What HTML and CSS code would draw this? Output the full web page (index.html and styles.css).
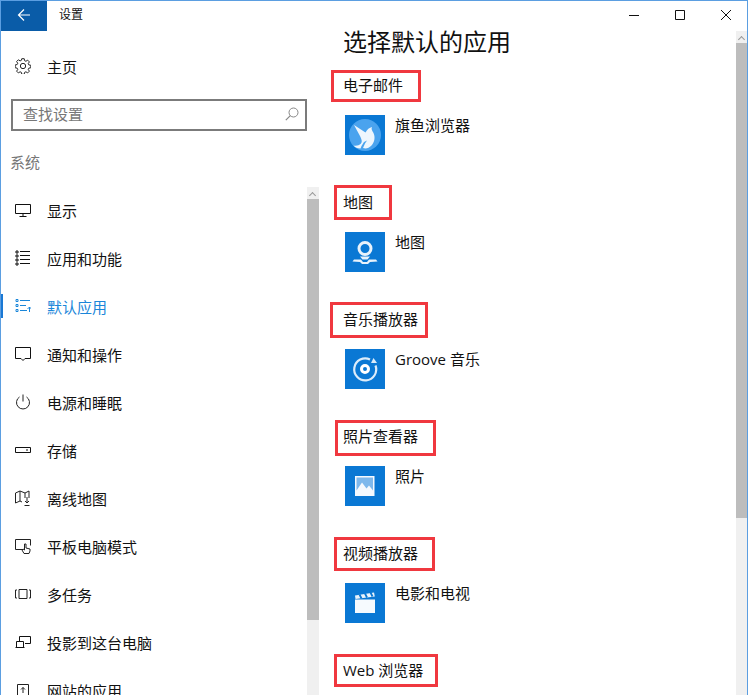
FILE: index.html
```html
<!DOCTYPE html>
<html lang="zh-CN">
<head>
<meta charset="utf-8">
<title>设置</title>
<link rel="stylesheet" href="styles.css">
</head>
<body>
<div class="window">
  <aside class="sidebar">
    <div class="titlebar">
      <div class="back"><svg width="16" height="16" viewBox="0 0 16 16"><path d="M14 8H2.500M8 2.500 2.500 8 8 13.500" fill="none" stroke="#fff" stroke-width="1.200"/></svg></div>
      <span class="apptitle">设置</span>
    </div>
    <div class="home">
      <svg class="icon" width="16" height="16" viewBox="0 0 18 18"><g fill="none" stroke="#222" stroke-width="1.100"><circle cx="9" cy="9" r="3"/><path d="M7.600.8h2.800l.4 2.200 1.500.7 1.900-1.300 2 2-1.300 1.900.7 1.500 2.200.4v2.800l-2.200.4-.7 1.500 1.300 1.900-2 2-1.900-1.300-1.500.7-.4 2.200H7.600l-.4-2.200-1.500-.7-1.900 1.300-2-2 1.300-1.900-.7-1.500-2.200-.4V7.800l2.200-.4.7-1.500-1.300-1.900 2-2 1.900 1.300 1.500-.7z"/></g></svg>
      <span>主页</span>
    </div>
    <div class="search">
      <span>查找设置</span>
      <svg width="14" height="14" viewBox="0 0 14 14"><circle cx="8.500" cy="5.500" r="4.500" fill="none" stroke="#888"/><path d="M5.300 8.700.8 13.200" stroke="#888" stroke-width="1.200"/></svg>
    </div>
    <div class="group">系统</div>
    <nav class="nav">
      <div class="navitem"><svg class="icon" width="16" height="16" viewBox="0 0 16 16"><path d="M.5 2.500h15v9H.5zM8 11.500v2.500M4.500 14.500h7" fill="none" stroke="#111"/></svg><span>显示</span></div>
      <div class="navitem"><svg class="icon" width="16" height="16" viewBox="0 0 16 16"><path d="M5 1.500h10M5 5.500h10M5 9.500h10M5 13.500h10M1 1h2v2H1zM1 5h2v2H1zM1 9h2v2H1zM1 13h2v2H1z" fill="none" stroke="#111"/></svg><span>应用和功能</span></div>
      <div class="navitem active"><svg class="icon" width="16" height="16" viewBox="0 0 16 16"><path d="M5 2.500h10M5 7.500h6M5 12.500h7M1 1.500h2v2H1zM1 6.500h2v2H1zM1 11.500h2v2H1zM14.500 14v-5M12.500 11l2-2 2 2" fill="none" stroke="#1a86d9"/></svg><span>默认应用</span></div>
      <div class="navitem"><svg class="icon" width="16" height="16" viewBox="0 0 16 16"><path d="M.5 1.500h15v11H10l-2 2-2-2H.5z" fill="none" stroke="#111"/></svg><span>通知和操作</span></div>
      <div class="navitem"><svg class="icon" width="16" height="16" viewBox="0 0 16 16"><path d="M4.500 3a6.500 6.500 0 1 0 7 0M8 .5v7" fill="none" stroke="#222"/></svg><span>电源和睡眠</span></div>
      <div class="navitem"><svg class="icon" width="16" height="16" viewBox="0 0 16 16"><path d="M.5 5.500h15v5H.5zM11 8h2" fill="none" stroke="#111"/></svg><span>存储</span></div>
      <div class="navitem"><svg class="icon" width="16" height="16" viewBox="0 0 16 16"><path d="M.5 13V3L5 1l5 2 4-2v7M.5 13 5 11l2 1M5 1v10M10 3v5M12 7v6M10 11l2 2 2-2M9.500 15.500h5" fill="none" stroke="#222"/></svg><span>离线地图</span></div>
      <div class="navitem"><svg class="icon" width="16" height="16" viewBox="0 0 16 16"><path d="M7 11.500H.5v-10h15v6M9 15.500 7 12l1-1 1.500 1V6h1.500v4l4 1v2l-1 2.500z" fill="#fff" stroke="#222"/></svg><span>平板电脑模式</span></div>
      <div class="navitem"><svg class="icon" width="16" height="16" viewBox="0 0 16 16"><path d="M4 3.500h8v9H4zM2 4H.5v8H2M14 4h1.500v8H14" fill="none" stroke="#222"/></svg><span>多任务</span></div>
      <div class="navitem"><svg class="icon" width="16" height="16" viewBox="0 0 16 16"><path d="M4.500 7V2.500h11v7H10M.5 13.500h9M1.500 13V7.500h7V13" fill="none" stroke="#111"/></svg><span>投影到这台电脑</span></div>
      <div class="navitem"><svg class="icon" width="16" height="16" viewBox="0 0 16 16"><path d="M2.500 2.500h11v11h-11zM8 11V5.500M6 7.500l2-2 2 2" fill="none" stroke="#222"/></svg><span>网站的应用</span></div>
    </nav>
    <div class="vscroll leftscroll"><i class="arrow"></i><b class="thumb leftthumb"></b></div>
  </aside>
  <main class="content">
    <div class="controls">
      <svg width="12" height="12" viewBox="0 0 12 12"><path d="M1 6.500h10" stroke="#111"/></svg>
      <svg width="12" height="12" viewBox="0 0 12 12"><path d="M1.500 1.500h9v9h-9z" fill="none" stroke="#111"/></svg>
      <svg width="12" height="12" viewBox="0 0 12 12"><path d="M1 1l10 10M11 1 1 11" stroke="#111"/></svg>
    </div>
    <h1>选择默认的应用</h1>
    <section class="app">
      <h2>电子邮件</h2><div class="mark m1"></div>
      <div class="row"><div class="tile"><svg width="40" height="40" viewBox="0 0 40 40"><circle cx="20" cy="20" r="16" fill="#4aa3ee"/><path d="M9 10l11.500 7.500c1.500-3 4-5 6.500-5.500-1 2 0 3.500 1.500 6 2 4.500 1 9-2 12.500-2 2-4 3-6 3l-2.500-.5 2-4.500 2-3-3 1.500-2.500 4-1 2.500c-3 0-5.500-1-7-3 3 .5 5.500 0 7.500-2 1.500-2 .5-4.500-1-7.500z" fill="#eef6fd"/></svg></div><span>旗鱼浏览器</span></div>
    </section>
    <section class="app">
      <h2>地图</h2><div class="mark m2"></div>
      <div class="row"><div class="tile"><svg width="40" height="40" viewBox="0 0 40 40"><circle cx="20" cy="16.500" r="6" fill="none" stroke="#e8f2fb" stroke-width="3"/><path d="M15 24.500h10l-2.500 3h-5zM9 27.500h7l2 2.500h4l2-2.500h7l1.500 2-7.500.5-2 2h-6l-2-2-7.500-.5z" fill="#e8f2fb"/></svg></div><span>地图</span></div>
    </section>
    <section class="app">
      <h2>音乐播放器</h2><div class="mark m3"></div>
      <div class="row"><div class="tile"><svg width="40" height="40" viewBox="0 0 40 40"><path d="M25 10.500a11 11 0 1 0 5.500 6" fill="none" stroke="#dcecfa" stroke-width="2.200"/><path d="M26 14l2.500-5 3.500 5z" fill="#dcecfa"/><circle cx="20" cy="20" r="3.500" fill="none" stroke="#fff" stroke-width="3"/></svg></div><span>Groove 音乐</span></div>
    </section>
    <section class="app">
      <h2>照片查看器</h2><div class="mark m4"></div>
      <div class="row"><div class="tile"><svg width="40" height="40" viewBox="0 0 40 40"><path d="M10 10h19.500v20H10z" fill="#f4f9fe"/><path d="M11.500 11.500h16.500v13l-4-5-2.500 3-4.500-6-5.500 8z" fill="#7db8ec"/></svg></div><span>照片</span></div>
    </section>
    <section class="app">
      <h2>视频播放器</h2><div class="mark m5"></div>
      <div class="row"><div class="tile"><svg width="40" height="40" viewBox="0 0 40 40"><path d="M10 16.500h20V30H10z" fill="#f6fafe"/><path d="M10 12.500l19-3 .8 4-19.300 2.500z" fill="#eaf3fb"/><path d="M14.500 11.500l2 4M20 10.500l2 4M25.500 9.500l2 4" stroke="#0a78d4" stroke-width="1.800"/></svg></div><span>电影和电视</span></div>
    </section>
    <section class="app">
      <h2>Web 浏览器</h2><div class="mark m6"></div>
    </section>
    <div class="vscroll rightscroll"><i class="arrow"></i><b class="thumb rightthumb"></b></div>
  </main>
</div>
</body>
</html>
```

FILE: styles.css
```css
* { box-sizing: border-box; }
html, body { margin: 0; height: 100%; overflow: hidden; background: #fff; }
body {
  font-family: "Noto Sans CJK SC", "Liberation Sans", sans-serif;
  color: #111;
  font-size: 15px;
}
.window {
  width: 748px;
  height: 695px;
  display: flex;
  border-top: 1px solid #5b9ee1;
  border-left: 1px solid #5b9ee1;
  border-right: 1px solid #5b9ee1;
  overflow: hidden;
}
.sidebar { width: 319px; flex: none; position: relative; }
.titlebar { display: flex; align-items: center; height: 30px; }
.back { width: 46px; height: 30px; background: #0a5ca8; display: flex; align-items: center; justify-content: center; padding-bottom: 2px; }
.apptitle { margin-left: 12px; font-size: 12px; line-height: 26px; height: 30px; }
.home { display: flex; align-items: center; height: 24px; margin-top: 23px; padding-left: 14px; }
.home span { margin-left: 16px; font-size: 15px; }
.search {
  margin: 21px 0 0 10px;
  width: 296px;
  height: 32px;
  border: 2px solid #7b7b7b;
  display: flex;
  align-items: center;
  justify-content: space-between;
  padding: 0 6px 3px 10px;
  color: #777;
  font-size: 15px;
}
.group { margin: 21px 0 0 9px; font-size: 15px; line-height: 20px; color: #777; }
.nav { margin-top: 14px; }
.navitem { display: flex; align-items: center; height: 48px; padding-left: 14px; position: relative; }
.navitem span { margin-left: 16px; font-size: 15px; }
.active { color: #1a86d9; }
.active::before { content: ""; position: absolute; left: 0; top: 12px; width: 2px; height: 24px; background: #1a78d4; }
.icon { flex: none; }
.vscroll { position: absolute; background: #f0f0f0; width: 12px; bottom: 0; }
.leftscroll { left: 306px; top: 186px; }
.rightscroll { right: 0; top: 30px; width: 11px; }
.arrow { display: block; position: absolute; left: 3px; top: 6px; width: 5px; height: 5px; border-left: 1px solid #999; border-top: 1px solid #999; transform: rotate(45deg); }
.thumb { display: block; position: absolute; left: 0; right: 0; background: #bdbdbd; }
.leftthumb { top: 12px; height: 421px; }
.rightthumb { top: 12px; height: 475px; }
.content { flex: 1; position: relative; padding-left: 23px; }
.controls { display: flex; justify-content: flex-end; align-items: center; gap: 34px; height: 28px; padding-right: 15px; }
h1 { margin: -5px 0 0; font-size: 24px; font-weight: 400; line-height: 34px; height: 34px; }
h2 { margin: 0; font-weight: 400; font-size: 15px; line-height: 20px; font-family: "Open Sans", "Noto Sans CJK SC", sans-serif; }
.app { position: relative; height: 117px; }
.app:first-of-type { margin-top: 17px; }
.row { display: flex; margin: 20px 0 0 2px; }
.row span { margin-left: 10px; font-size: 15px; line-height: 20px; font-family: "Open Sans", "Noto Sans CJK SC", sans-serif; }
.tile { width: 40px; height: 40px; background: #0a78d4; flex: none; }
.tile svg { display: block; }
/* red annotation boxes drawn over the headings */
.mark { position: absolute; border: 3px solid #f0383f; }
.m1 { left: -12px; top: -5px; width: 90px; height: 32px; }
.m2 { left: -9px; top: -7px; width: 58px; height: 35px; }
.m3 { left: -13px; top: -7px; width: 98px; height: 36px; }
.m4 { left: -8px; top: -6px; width: 101px; height: 36px; }
.m5 { left: -9px; top: -6px; width: 101px; height: 34px; }
.m6 { left: -9px; top: -6px; width: 104px; height: 33px; }
```
